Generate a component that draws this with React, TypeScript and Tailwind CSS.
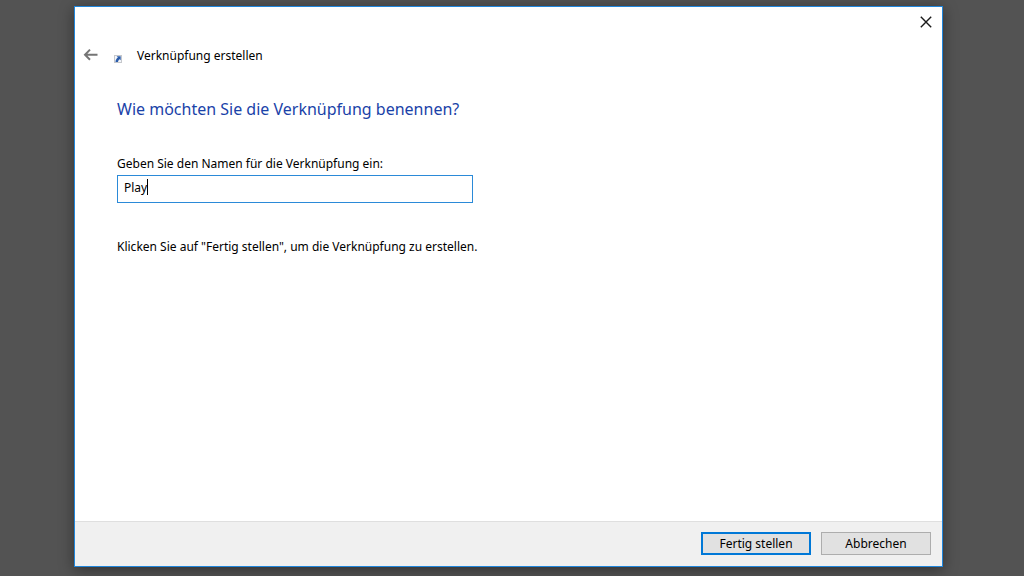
import { useState } from 'react';

function BackIcon() {
  return (
    <svg className="h-4 w-4" viewBox="0 0 16 16" fill="none" stroke="#757575" strokeWidth="2">
      <path d="M14.5 7.7H2.2M7 2.6L2 7.7L7 12.8" />
    </svg>
  );
}

function CloseIcon() {
  return (
    <svg className="h-3 w-3" viewBox="0 0 12 12" fill="none" stroke="#1a1a1a" strokeWidth="1.4">
      <path d="M0.8 0.8L11.2 11.2M11.2 0.8L0.8 11.2" />
    </svg>
  );
}

function ShortcutIcon() {
  return (
    <svg className="h-2 w-2" viewBox="0 0 8 8" fill="none">
      <rect x="0.5" y="0.5" width="7" height="7" fill="#f4f6fa" stroke="#c6c8cc" />
      <path d="M2.6 1.2H6.7V5.2L5.6 4.2C4.6 4.9 4.2 5.7 4 7H1.5C1.5 5 2.4 3.5 3.9 2.5Z" fill="#2a5caa" />
    </svg>
  );
}

function App() {
  const [name, setName] = useState('Play');
  const [focused, setFocused] = useState(false);

  return (
    <div className="flex min-h-screen bg-[#535353] pt-1.5 pr-[81px] pb-[9px] pl-[74px] font-['Noto_Sans',sans-serif] text-[12px] leading-[22px] text-black">
      <main className="flex flex-1 flex-col border border-[#2086dc] bg-white shadow-[0_3px_14px_rgba(0,0,0,0.4)]">
        <div className="flex h-8 justify-end">
          <button type="button" aria-label="Schließen" className="flex h-7 w-8 items-center justify-center pt-0.5">
            <CloseIcon />
          </button>
        </div>

        <header className="flex h-8 items-center pl-2">
          <button type="button" aria-label="Zurück" className="flex h-4 w-4 items-center">
            <BackIcon />
          </button>
          <span className="ml-[15px] pt-2">
            <ShortcutIcon />
          </span>
          <span className="ml-[15px] pt-0.5">Verknüpfung erstellen</span>
        </header>

        <div className="flex-1 px-[42px] pt-6">
          <h1 className="text-[16px] leading-7 text-[#1a42a8]">Wie möchten Sie die Verknüpfung benennen?</h1>

          <label htmlFor="shortcut-name" className="mt-[30px] block">
            Geben Sie den Namen für die Verknüpfung ein:
          </label>
          <div className="relative max-w-[356px]">
            <input
              id="shortcut-name"
              type="text"
              value={name}
              onChange={(e) => setName(e.target.value)}
              onFocus={() => setFocused(true)}
              onBlur={() => setFocused(false)}
              className="block h-7 w-full border border-[#2b8ad8] bg-white px-1.5 pb-1 outline-none"
            />
            {!focused && (
              <span className="pointer-events-none absolute top-1 left-[7px] flex h-4 items-center">
                <span className="invisible whitespace-pre" aria-hidden="true">{name}</span>
                <span className="h-4 w-px bg-black" />
              </span>
            )}
          </div>

          <p className="mt-[33px]">Klicken Sie auf "Fertig stellen", um die Verknüpfung zu erstellen.</p>
        </div>

        <footer className="flex h-[45px] items-center justify-end gap-2.5 border-t border-[#dfdfdf] bg-[#f0f0f0] pr-[11px] pb-0.5">
          <button type="submit" className="h-[23px] w-[110px] border-2 border-[#0078d7] bg-[#e1e1e1] pt-0.5 leading-4">
            Fertig stellen
          </button>
          <button type="button" className="h-[23px] w-[110px] border border-[#adadad] bg-[#e1e1e1] pt-0.5 leading-4">
            Abbrechen
          </button>
        </footer>
      </main>
    </div>
  );
}

export default App;
